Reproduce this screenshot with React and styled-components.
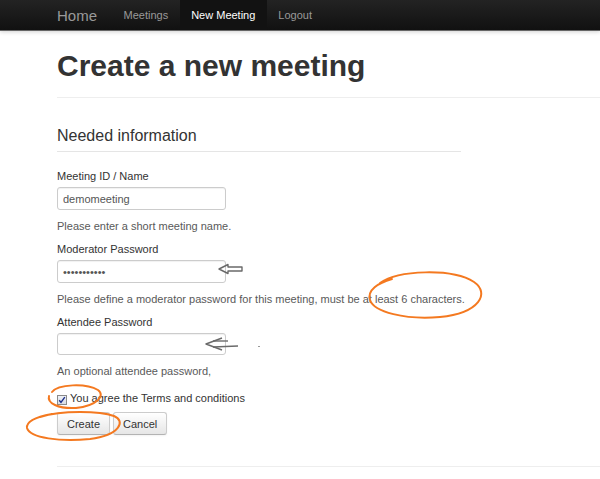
import React from 'react';
import styled, { createGlobalStyle } from 'styled-components';

const GlobalStyle = createGlobalStyle`
  html, body {
    margin: 0;
    padding: 0;
    background: #fff;
    font-family: "Liberation Sans", Arial, sans-serif;
    color: #333;
  }
`;

const Page = styled.div`
  position: relative;
  width: 600px;
  height: 479px;
  overflow: hidden;
`;

const NavBar = styled.div`
  height: 30px;
  display: flex;
  align-items: stretch;
  padding-left: 57px;
  background: linear-gradient(#232323, #111);
  border-bottom: 1px solid #666;
  box-shadow: 0 1px 4px rgba(0, 0, 0, 0.18);
`;

const Brand = styled.a`
  display: flex;
  align-items: center;
  font-size: 15px;
  color: #999;
  text-decoration: none;
  margin-right: 15px;
`;

const NavItem = styled.a`
  display: flex;
  align-items: center;
  padding: 0 11.5px;
  font-size: 11px;
  text-decoration: none;
  color: ${p => (p.$active ? '#fff' : '#999')};
  background: ${p => (p.$active ? '#121212' : 'transparent')};
`;

const Main = styled.div`
  padding-left: 57px;
  padding-top: 17px;
`;

const PageHeader = styled.div`
  padding-bottom: 13px;
  border-bottom: 1px solid #eee;
  margin-bottom: 28px;
`;

const Title = styled.h1`
  margin: 0;
  font-size: 30px;
  line-height: 36px;
  font-weight: bold;
  color: #333;
`;

const Form = styled.form`
  width: 404px;
`;

const Legend = styled.div`
  font-size: 16px;
  line-height: 20px;
  color: #333;
  padding-bottom: 5px;
  border-bottom: 1px solid #e5e5e5;
  margin-bottom: 16px;
`;

const Field = styled.div`
  display: flex;
  flex-direction: column;
  align-items: flex-start;
  margin-bottom: 7px;
`;

const Label = styled.label`
  font-size: 11px;
  line-height: 16px;
  color: #333;
  margin-bottom: 3px;
`;

const Input = styled.input`
  box-sizing: border-box;
  width: 169px;
  height: ${p => p.$h || 23}px;
  padding: 0 5px;
  border: 1px solid #ccc;
  border-radius: 3px;
  box-shadow: inset 0 1px 1px rgba(0, 0, 0, 0.06);
  font-family: "Liberation Sans", Arial, sans-serif;
  font-size: 11px;
  color: #555;
  margin-bottom: 8px;
  outline: none;
`;

const Help = styled.span`
  font-size: 11px;
  line-height: 16px;
  color: #595959;
  white-space: nowrap;
`;

const CheckRow = styled.label`
  display: flex;
  align-items: center;
  gap: 3px;
  margin-top: 11px;
  font-size: 11px;
  line-height: 16px;
  color: #333;
`;

const CheckBox = styled.span`
  box-sizing: border-box;
  width: 10px;
  height: 10px;
  margin-top: 4px;
  border: 1px solid #8a8a8a;
  background: linear-gradient(#eef1f6, #d8dde6);
  display: flex;
  align-items: center;
  justify-content: center;
`;

const Actions = styled.div`
  display: flex;
  gap: 3px;
  margin-top: 6px;
`;

const Button = styled.button`
  box-sizing: border-box;
  height: 23px;
  padding: 0 9px;
  font-family: "Liberation Sans", Arial, sans-serif;
  font-size: 11px;
  color: #333;
  background: linear-gradient(#fff, #e6e6e6);
  border: 1px solid #ccc;
  border-bottom-color: #b3b3b3;
  border-radius: 3px;
  box-shadow: inset 0 1px 0 rgba(255, 255, 255, 0.2), 0 1px 2px rgba(0, 0, 0, 0.05);
`;

const Footer = styled.div`
  margin-top: 31px;
  border-top: 1px solid #eee;
`;

const Marks = styled.svg`
  position: absolute;
  left: 0;
  top: 0;
  pointer-events: none;
`;

function Annotations() {
  return (
    <Marks width="600" height="479" viewBox="0 0 600 479">
      <g fill="none" stroke="#f47920" strokeWidth="2" strokeLinecap="round">
        <path d="M380 283 C398 270 452 268 474 282 C490 293 480 313 440 317 C405 320 374 312 370 300 C367 290 378 283 392 279" />
        <path d="M52 392 C58 384 86 383 98 390 C106 396 96 406 76 408 C58 409 47 403 49 396" />
        <path d="M40 417 C62 410 100 411 114 416 C126 421 120 435 90 439 C60 442 30 438 27 428 C26 421 36 417 52 414" />
      </g>
      <g fill="none" stroke="#6a6a6a" strokeWidth="1.4" strokeLinejoin="round">
        <path d="M219 269 L228 264.5 L228 267 L242 267 L242 271 L228 271 L228 273.5 Z" />
        <path d="M222 338 L206 344 L222 350" />
        <path d="M213 341 L228 341" />
        <path d="M213 347 L238 346" />
      </g>
      <rect x="258" y="346" width="2" height="1" fill="#999" />
    </Marks>
  );
}

function App() {
  return (
    <Page>
      <GlobalStyle />
      <NavBar>
        <Brand href="#">Home</Brand>
        <NavItem href="#">Meetings</NavItem>
        <NavItem href="#" $active>New Meeting</NavItem>
        <NavItem href="#">Logout</NavItem>
      </NavBar>
      <Main>
        <PageHeader>
          <Title>Create a new meeting</Title>
        </PageHeader>
        <Form onSubmit={e => e.preventDefault()}>
          <Legend>Needed information</Legend>
          <Field>
            <Label>Meeting ID / Name</Label>
            <Input type="text" defaultValue="demomeeting" />
            <Help>Please enter a short meeting name.</Help>
          </Field>
          <Field>
            <Label>Moderator Password</Label>
            <Input type="password" defaultValue="demomeeting" />
            <Help>Please define a moderator password for this meeting, must be at least 6 characters.</Help>
          </Field>
          <Field>
            <Label>Attendee Password</Label>
            <Input type="password" $h={22} />
            <Help>An optional attendee password,</Help>
          </Field>
          <CheckRow>
            <CheckBox>
              <svg width="8" height="8" viewBox="0 0 8 8">
                <path d="M1.2 4.2 L3 6.4 L6.8 1.2" fill="none" stroke="#1d2f8a" strokeWidth="1.4" />
              </svg>
            </CheckBox>
            You agree the Terms and conditions
          </CheckRow>
          <Actions>
            <Button type="submit">Create</Button>
            <Button type="button">Cancel</Button>
          </Actions>
        </Form>
        <Footer />
      </Main>
      <Annotations />
    </Page>
  );
}

export default App;
